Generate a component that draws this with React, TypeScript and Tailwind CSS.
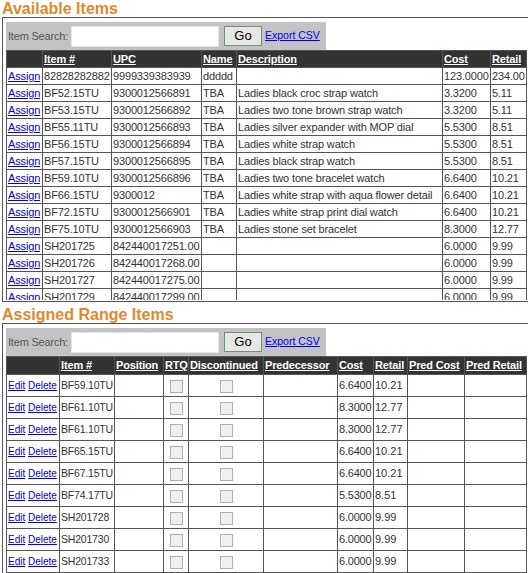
import React from "react";

const available = [
  ["82828282882", "9999339383939", "ddddd", "", "123.0000", "234.00"],
  ["BF52.15TU", "9300012566891", "TBA", "Ladies black croc strap watch", "3.3200", "5.11"],
  ["BF53.15TU", "9300012566892", "TBA", "Ladies two tone brown strap watch", "3.3200", "5.11"],
  ["BF55.11TU", "9300012566893", "TBA", "Ladies silver expander with MOP dial", "5.5300", "8.51"],
  ["BF56.15TU", "9300012566894", "TBA", "Ladies white strap watch", "5.5300", "8.51"],
  ["BF57.15TU", "9300012566895", "TBA", "Ladies black strap watch", "5.5300", "8.51"],
  ["BF59.10TU", "9300012566896", "TBA", "Ladies two tone bracelet watch", "6.6400", "10.21"],
  ["BF66.15TU", "9300012", "TBA", "Ladies white strap with aqua flower detail", "6.6400", "10.21"],
  ["BF72.15TU", "9300012566901", "TBA", "Ladies white strap print dial watch", "6.6400", "10.21"],
  ["BF75.10TU", "9300012566903", "TBA", "Ladies stone set bracelet", "8.3000", "12.77"],
  ["SH201725", "842440017251.00", "", "", "6.0000", "9.99"],
  ["SH201726", "842440017268.00", "", "", "6.0000", "9.99"],
  ["SH201727", "842440017275.00", "", "", "6.0000", "9.99"],
  ["SH201729", "842440017299.00", "", "", "6.0000", "9.99"],
];

const assigned = [
  ["BF59.10TU", "6.6400", "10.21"],
  ["BF61.10TU", "8.3000", "12.77"],
  ["BF61.10TU", "8.3000", "12.77"],
  ["BF65.15TU", "6.6400", "10.21"],
  ["BF67.15TU", "6.6400", "10.21"],
  ["BF74.17TU", "5.5300", "8.51"],
  ["SH201728", "6.0000", "9.99"],
  ["SH201730", "6.0000", "9.99"],
  ["SH201733", "6.0000", "9.99"],
  ["SH201733", "6.0000", "9.99"],
];

function SearchBar() {
  return (
    <div className="flex h-[28px] w-[320px] items-center bg-[#c3c3c3] pl-[2px]">
      <span className="text-[11px] tracking-[-0.2px] text-[#555]">Item Search:</span>
      <div className="ml-[3px] h-[21px] w-[148px] border border-[#e4e4e4] bg-white" />
      <button className="ml-[5px] h-[20px] w-[38px] border border-[#6a946a] bg-[#e6e6e6] text-[13px] leading-[18px] text-black">
        Go
      </button>
      <a className="ml-[3px] cursor-pointer text-[10.5px] text-[#0000ee] underline">Export CSV</a>
    </div>
  );
}

const base = "border border-[#555] px-[1px] whitespace-nowrap overflow-hidden";
const cell = base + " text-left";
const mid = base + " text-center";
const head = base + " text-left font-bold text-white underline";

function Checkbox() {
  return <span className="inline-block h-[13px] w-[13px] border border-[#b0b0b0] bg-[#efefef] align-middle" />;
}

export default function App() {
  return (
    <div className="h-[573px] w-[528px] overflow-hidden bg-white font-['Liberation_Sans',Arial,sans-serif]">
      <div className="w-[560px]">
        <h2 className="pl-[2px] text-[16px] font-bold leading-[17px] text-[#e2892b]">Available Items</h2>
        <div className="ml-[2px] border border-[#555] pb-[1px] pl-[3px] pt-[4px]">
          <SearchBar />
          <div className="h-[250px] overflow-hidden">
            <table className="w-[520px] table-fixed border-collapse text-[11px] leading-[16px] tracking-[-0.15px] text-[#333]">
              <colgroup>
                <col className="w-[36px]" />
                <col className="w-[69px]" />
                <col className="w-[90px]" />
                <col className="w-[35px]" />
                <col className="w-[206px]" />
                <col className="w-[48px]" />
                <col className="w-[36px]" />
              </colgroup>
              <thead>
                <tr className="bg-[#333]">
                  <th className={head}></th>
                  <th className={head}>Item #</th>
                  <th className={head}>UPC</th>
                  <th className={head}>Name</th>
                  <th className={head}>Description</th>
                  <th className={head}>Cost</th>
                  <th className={head}>Retail</th>
                </tr>
              </thead>
              <tbody>
                {available.map((r, i) => (
                  <tr key={i}>
                    <td className={cell}>
                      <a className="cursor-pointer text-[#0000ee] underline">Assign</a>
                    </td>
                    {r.map((v, j) => (
                      <td key={j} className={cell}>
                        {v}
                      </td>
                    ))}
                  </tr>
                ))}
              </tbody>
            </table>
          </div>
        </div>

        <h2 className="mt-[4px] pl-[2px] text-[16px] font-bold leading-[17px] text-[#e2892b]">Assigned Range Items</h2>
        <div className="ml-[2px] border border-[#555] pl-[3px] pt-[4px]">
          <SearchBar />
          <table className="w-[520px] table-fixed border-collapse text-[11px] text-[#333]">
            <colgroup>
              <col className="w-[53px]" />
              <col className="w-[55px]" />
              <col className="w-[49px]" />
              <col className="w-[25px]" />
              <col className="w-[75px]" />
              <col className="w-[74px]" />
              <col className="w-[36px]" />
              <col className="w-[34px]" />
              <col className="w-[57px]" />
              <col className="w-[62px]" />
            </colgroup>
            <thead>
              <tr className="bg-[#333] leading-[17px] tracking-[-0.15px]">
                <th className={head}></th>
                <th className={head}>Item #</th>
                <th className={head}>Position</th>
                <th className={head}>RTQ</th>
                <th className={head}>Discontinued</th>
                <th className={head}>Predecessor</th>
                <th className={head}>Cost</th>
                <th className={head}>Retail</th>
                <th className={head}>Pred Cost</th>
                <th className={head}>Pred Retail</th>
              </tr>
            </thead>
            <tbody>
              {assigned.map((r, i) => (
                <tr key={i} className="leading-[21px]">
                  <td className={cell + " text-[10px]"}>
                    <a className="cursor-pointer text-[#0000ee] underline">Edit</a>{" "}
                    <a className="cursor-pointer text-[#0000ee] underline">Delete</a>
                  </td>
                  <td className={cell + " text-[10.5px] tracking-[-0.2px]"}>{r[0]}</td>
                  <td className={cell}></td>
                  <td className={mid}>
                    <Checkbox />
                  </td>
                  <td className={mid}>
                    <Checkbox />
                  </td>
                  <td className={cell}></td>
                  <td className={cell + " tracking-[-0.2px]"}>{r[1]}</td>
                  <td className={cell}>{r[2]}</td>
                  <td className={cell}></td>
                  <td className={cell}></td>
                </tr>
              ))}
            </tbody>
          </table>
        </div>
      </div>
    </div>
  );
}
